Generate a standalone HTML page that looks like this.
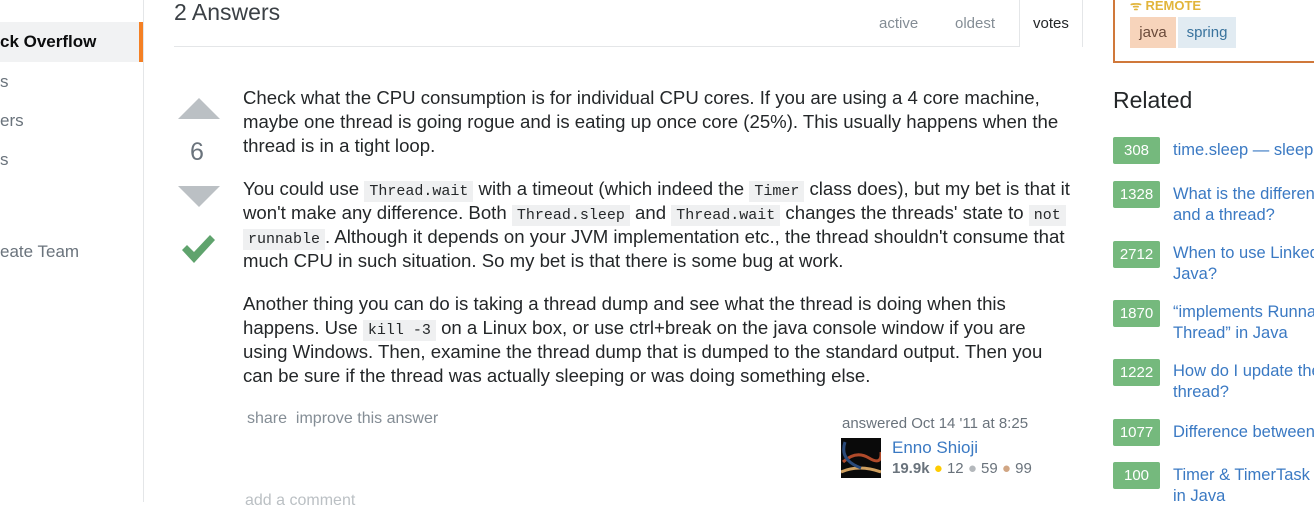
<!DOCTYPE html>
<html><head><meta charset="utf-8"><style>
*{margin:0;padding:0;box-sizing:border-box}
body{width:1314px;height:502px;overflow:hidden;background:#fff;font-family:"Liberation Sans",Arial,sans-serif;position:relative;color:#242729}
.a{position:absolute;white-space:nowrap}
.side{position:absolute;left:0;top:0;width:144px;height:502px;border-right:1px solid #e4e6e8}
.nav{position:absolute;left:0;font-size:17px;color:#6a737c}
.body{position:absolute;left:243px;width:860px;font-size:18.6px;line-height:24px;color:#242729;white-space:nowrap}
.body p{margin-bottom:19px}
code{font-family:"Liberation Mono",monospace;font-size:15px;line-height:1;background:#eff0f1;padding:2px 5px}
.badge{position:absolute;left:1113px;width:47px;height:27px;background:#75b97d;color:#fff;font-size:15px;text-align:center;line-height:27px;border-radius:2px}
.rl{position:absolute;left:1173px;font-size:16.5px;line-height:21px;color:#3a79c3;white-space:nowrap}
</style></head><body>
<div class="side">
 <div style="position:absolute;left:0;top:22px;width:143px;height:40px;background:#f1f2f3;border-right:4px solid #f48024"></div>
 <div class="nav" style="top:32px;color:#0c0d0e;font-weight:bold">ck Overflow</div>
 <div class="nav" style="top:72px">s</div>
 <div class="nav" style="top:111px">ers</div>
 <div class="nav" style="top:150px">s</div>
 <div class="nav" style="top:242px">eate Team</div>
</div>
<div class="a" style="left:174px;top:0px;font-size:23px;color:#3b4045;line-height:24px">2 Answers</div>
<div style="position:absolute;left:174px;top:46px;width:909px;height:1px;background:#e4e6e8"></div>
<div style="position:absolute;left:1019px;top:0;width:64px;height:47px;border-left:1px solid #e4e6e8;border-right:1px solid #e4e6e8;background:#fff"></div>
<div class="a" style="left:879px;top:15px;font-size:15px;color:#848d95">active</div>
<div class="a" style="left:955px;top:15px;font-size:15px;color:#848d95">oldest</div>
<div class="a" style="left:1033px;top:15px;font-size:15px;color:#242729">votes</div>

<svg class="a" style="left:178px;top:98px" width="42" height="22"><polygon points="0,21 21,0 42,21" fill="#bbc0c4"/></svg>
<div class="a" style="left:190px;top:138px;font-size:25px;color:#6a737c">6</div>
<svg class="a" style="left:178px;top:186px" width="42" height="22"><polygon points="0,0 42,0 21,21" fill="#bbc0c4"/></svg>
<svg class="a" style="left:182px;top:233px" width="34" height="31"><polygon points="0,17 5,12 12,19 28,2 33,7 12,30" fill="#5fa36d"/></svg>

<div class="body" style="top:86px">
<p>Check what the CPU consumption is for individual CPU cores. If you are using a 4 core machine,<br>maybe one thread is going rogue and is eating up once core (25%). This usually happens when the<br>thread is in a tight loop.</p>
<p>You could use <code>Thread.wait</code> with a timeout (which indeed the <code>Timer</code> class does), but my bet is that it<br>won't make any difference. Both <code>Thread.sleep</code> and <code>Thread.wait</code> changes the threads' state to <code>not</code><br><code>runnable</code>. Although it depends on your JVM implementation etc., the thread shouldn't consume that<br>much CPU in such situation. So my bet is that there is some bug at work.</p>
<p>Another thing you can do is taking a thread dump and see what the thread is doing when this<br>happens. Use <code>kill -3</code> on a Linux box, or use ctrl+break on the java console window if you are<br>using Windows. Then, examine the thread dump that is dumped to the standard output. Then you<br>can be sure if the thread was actually sleeping or was doing something else.</p>
</div>

<div class="a" style="left:247px;top:410px;font-size:16px;color:#848d95">share&nbsp;&nbsp;improve this answer</div>
<div class="a" style="left:245px;top:492px;font-size:16px;color:#bbc0c4">add a comment</div>
<div class="a" style="left:842px;top:415px;font-size:15px;color:#6a737c">answered Oct 14 '11 at 8:25</div>
<svg class="a" style="left:841px;top:438px" width="40" height="40"><rect width="40" height="40" fill="#0a0a0a"/><path d="M2 24 Q15 12 28 20 T40 14" stroke="#b04a2a" stroke-width="3" fill="none"/><path d="M0 34 Q18 26 40 34" stroke="#d0a060" stroke-width="3" fill="none"/><path d="M4 4 Q-2 22 20 30" stroke="#2a4a7a" stroke-width="3" fill="none"/></svg>
<div class="a" style="left:892px;top:438px;font-size:17px;color:#3a79c3">Enno Shioji</div>
<div class="a" style="left:892px;top:460px;font-size:15px;color:#6a737c"><b>19.9k</b> <span style="color:#ffcc01">●</span> 12 <span style="color:#b4b8bc">●</span> 59 <span style="color:#d1a684">●</span> 99</div>

<div style="position:absolute;left:1113px;top:-10px;width:220px;height:73px;border:2px solid #d0783a;border-top:none"></div>
<div class="a" style="left:1130px;top:-4px;font-size:13px;font-weight:bold;color:#e2b53b">ᯤ REMOTE</div>
<div class="a" style="left:1130px;top:17px;width:46px;height:31px;background:#f7d4bb;color:#6a4a3a;font-size:15px;text-align:center;line-height:31px">java</div>
<div class="a" style="left:1178px;top:17px;width:58px;height:31px;background:#e1ebf2;color:#39739d;font-size:15px;text-align:center;line-height:31px">spring</div>

<div class="a" style="left:1113px;top:87px;font-size:23px;color:#242729">Related</div>
<div class="badge" style="top:137px">308</div><div class="rl" style="top:140px">time.sleep — sleeps</div>
<div class="badge" style="top:181px">1328</div><div class="rl" style="top:184px">What is the differenc<br>and a thread?</div>
<div class="badge" style="top:241px">2712</div><div class="rl" style="top:243px">When to use Linked<br>Java?</div>
<div class="badge" style="top:300px">1870</div><div class="rl" style="top:302px">“implements Runna<br>Thread” in Java</div>
<div class="badge" style="top:359px">1222</div><div class="rl" style="top:361px">How do I update the<br>thread?</div>
<div class="badge" style="top:419px">1077</div><div class="rl" style="top:422px">Difference between</div>
<div class="badge" style="top:462px">100</div><div class="rl" style="top:465px">Timer &amp; TimerTask v<br>in Java</div>
</body></html>
